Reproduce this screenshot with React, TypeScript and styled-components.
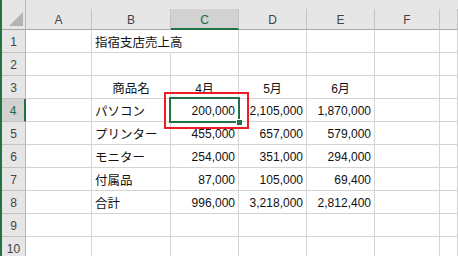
import React from "react";
import styled, { createGlobalStyle, css } from "styled-components";

const Global = createGlobalStyle`
  html, body { margin: 0; padding: 0; background: #fff; overflow: hidden; }
  body { font-family: "Liberation Sans", "Noto Sans CJK JP", sans-serif; }
`;

const Page = styled.div`
  display: flex;
  width: 458px;
  height: 256px;
  overflow: hidden;
`;

const GreenBar = styled.div`
  width: 2px;
  flex: none;
  background: #217346;
`;

const Sheet = styled.div`
  flex: 1;
  display: grid;
  grid-template-columns: 24px 66px 79px 68px 68px 68px 65px 1fr;
  grid-template-rows: 9px 21px repeat(10, 23px);
`;

const Corner = styled.div`
  grid-row: 1 / 3;
  grid-column: 1;
  background: #e6e6e6;
  border-right: 1px solid #b9b9b9;
  border-bottom: 1px solid #a8a8a8;
  box-sizing: border-box;
  display: flex;
  align-items: flex-end;
  justify-content: flex-end;
  padding: 0 2px 3px 0;
`;

const TopBand = styled.div`
  grid-row: 1;
  grid-column: 2 / -1;
  background: #e6e6e6;
`;

const ColHead = styled.div<{ $sel?: boolean }>`
  grid-row: 2;
  box-sizing: border-box;
  background: ${(p) => (p.$sel ? "#d2d2d2" : "#e6e6e6")};
  border-right: 1px solid #c4c4c4;
  border-bottom: ${(p) => (p.$sel ? "2px solid #217346" : "1px solid #a8a8a8")};
  color: ${(p) => (p.$sel ? "#1d6b40" : "#444")};
  font-size: 12px;
  display: flex;
  align-items: center;
  justify-content: center;
  padding-top: ${(p) => (p.$sel ? "2px" : "1px")};
`;

const RowHead = styled.div<{ $sel?: boolean }>`
  box-sizing: border-box;
  background: ${(p) => (p.$sel ? "#d2d2d2" : "#e6e6e6")};
  border-right: ${(p) => (p.$sel ? "2px solid #217346" : "1px solid #b9b9b9")};
  border-bottom: 1px solid #c4c4c4;
  color: ${(p) => (p.$sel ? "#1d6b40" : "#444")};
  font-size: 12px;
  display: flex;
  align-items: center;
  justify-content: center;
  padding-top: 1px;
`;

const Cell = styled.div<{
  $align?: "left" | "center" | "right";
  $overflow?: boolean;
  $jp?: boolean;
}>`
  position: relative;
  box-sizing: border-box;
  border-right: 1px solid #d4d4d4;
  border-bottom: 1px solid #d4d4d4;
  color: #111;
  font-size: ${(p) => (p.$jp ? "12.5px" : "12px")};
  white-space: nowrap;
  display: flex;
  align-items: center;
  padding: 1px 3px 0 3px;
  overflow: visible;
  justify-content: ${(p) =>
    p.$align === "right" ? "flex-end" : p.$align === "center" ? "center" : "flex-start"};
  ${(p) =>
    p.$overflow &&
    css`
      border-right-color: transparent;
      z-index: 1;
    `}
`;

const Selection = styled.div`
  position: absolute;
  left: -2px;
  top: -2px;
  right: -2px;
  bottom: -2px;
  border: 2px solid #217346;
  pointer-events: none;
  z-index: 2;
`;

const FillHandle = styled.div`
  position: absolute;
  right: -4px;
  bottom: -4px;
  width: 5px;
  height: 5px;
  background: #217346;
  border: 1px solid #fff;
  border-right: none;
  border-bottom: none;
`;

const Highlight = styled.div`
  position: absolute;
  left: -7px;
  top: -7px;
  right: -11px;
  bottom: -8px;
  border: 2px solid #ee1c24;
  pointer-events: none;
  z-index: 3;
`;

const cols = ["A", "B", "C", "D", "E", "F", ""];

type Row = { b?: string; c?: string; d?: string; e?: string; header?: boolean; title?: boolean };

const rows: Row[] = [
  { b: "指宿支店売上高", title: true },
  {},
  { b: "商品名", c: "4月", d: "5月", e: "6月", header: true },
  { b: "パソコン", c: "200,000", d: "2,105,000", e: "1,870,000" },
  { b: "プリンター", c: "455,000", d: "657,000", e: "579,000" },
  { b: "モニター", c: "254,000", d: "351,000", e: "294,000" },
  { b: "付属品", c: "87,000", d: "105,000", e: "69,400" },
  { b: "合計", c: "996,000", d: "3,218,000", e: "2,812,400" },
  {},
  {},
];

export default function App() {
  return (
    <>
      <Global />
      <Page>
        <GreenBar />
        <Sheet>
          <Corner>
            <svg width="14" height="14" viewBox="0 0 14 14">
              <polygon points="14,0 14,14 0,14" fill="#b4b4b4" />
            </svg>
          </Corner>
          <TopBand />
          {cols.map((c, i) => (
            <ColHead key={i} $sel={c === "C"}>
              {c}
            </ColHead>
          ))}
          {rows.map((r, i) => {
            const n = i + 1;
            const al = r.header ? "center" : "right";
            return (
              <React.Fragment key={n}>
                <RowHead $sel={n === 4}>{n}</RowHead>
                <Cell />
                <Cell $jp $align={r.header ? "center" : "left"} $overflow={r.title}>
                  {r.b}
                </Cell>
                <Cell $align={al}>
                  {r.c}
                  {n === 4 && (
                    <>
                      <Selection>
                        <FillHandle />
                      </Selection>
                      <Highlight />
                    </>
                  )}
                </Cell>
                <Cell $align={al}>{r.d}</Cell>
                <Cell $align={al}>{r.e}</Cell>
                <Cell />
                <Cell />
              </React.Fragment>
            );
          })}
        </Sheet>
      </Page>
    </>
  );
}
